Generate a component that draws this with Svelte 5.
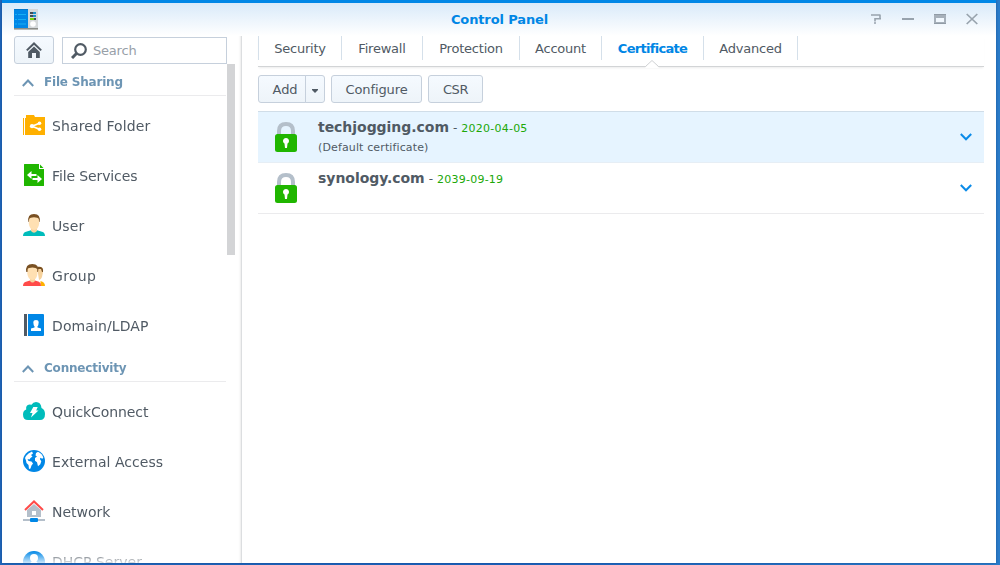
<script>
  const sections = [
    {
      title: 'File Sharing',
      items: [
        { name: 'Shared Folder', icon: 'folder', track: 0.1 },
        { name: 'File Services', icon: 'file', track: -0.12 },
        { name: 'User', icon: 'user', track: 0.1 },
        { name: 'Group', icon: 'group', track: 0.3 },
        { name: 'Domain/LDAP', icon: 'domain', track: 0.1 }
      ]
    },
    {
      title: 'Connectivity',
      items: [
        { name: 'QuickConnect', icon: 'cloud', track: -0.1 },
        { name: 'External Access', icon: 'globe', track: 0.05 },
        { name: 'Network', icon: 'network', track: 0 },
        { name: 'DHCP Server', icon: 'dhcp', track: 0 }
      ]
    }
  ];
  const tabs = [
    { name: 'Security', width: 83 },
    { name: 'Firewall', width: 81 },
    { name: 'Protection', width: 97 },
    { name: 'Account', width: 82 },
    { name: 'Certificate', width: 102 },
    { name: 'Advanced', width: 95 }
  ];
  const certificates = [
    { domain: 'techjogging.com', date: '2020-04-05', isDefault: true },
    { domain: 'synology.com', date: '2039-09-19', isDefault: false }
  ];
  let active = $state('Certificate');
  let selected = $state('techjogging.com');
</script>

<div class="desktop">
  <div class="window">
    <header class="titlebar">
      <svg class="app-icon" width="24" height="21" viewBox="0 0 24 21">
        <rect y="19" width="24" height="1" fill="#8b8d89" />
        <rect y="20" width="24" height="1" fill="#b9bab6" />
        <rect width="14" height="19" fill="#0087e6" />
        <rect width="14" height="1" fill="#0077cc" />
        <path d="M1 5.500h2M4 5.500h8M1 10.500h2M4 10.500h8M1 15h2M4 15h8" stroke="#16aef4" />
        <rect x="14" width="10" height="19" fill="#d4d8da" />
        <path d="M16 4h6M16 7h6M16 10h6" stroke="#414c56" stroke-width="2" />
        <path d="M19 4h3M19 7h3" stroke="#12a5ed" stroke-width="1.500" />
        <path d="M16 10h4" stroke="#76d500" stroke-width="2" />
        <circle cx="19" cy="15" r="2.800" fill="#fff" />
      </svg>
      <h1>Control Panel</h1>
      <div class="controls">
        <svg width="12" height="12" viewBox="0 0 12 12"><path d="M1 2h9.500M10 2v4M11 5.700H5M5 5v3.500M4 10h2" fill="none" stroke="#98a3ad" stroke-width="1.600" /></svg>
        <svg width="12" height="12" viewBox="0 0 12 12"><path d="M0 6h12" stroke="#98a3ad" stroke-width="2" /></svg>
        <svg width="12" height="12" viewBox="0 0 12 12"><path d="M0 1h12v10H0z" fill="#a6b0ba" /><path d="M0 1h12v1H0zM0 10h12v1H0z" fill="#919ca6" /><path d="M2 5h8v4H2z" fill="#f1f8fe" /></svg>
        <svg width="12" height="12" viewBox="0 0 12 12"><path d="M.7 1l10.600 10M11.300 1L.7 11" stroke="#98a3ad" stroke-width="1.700" /></svg>
      </div>
    </header>

    <div class="body">
      <aside>
        <div class="tools">
          <button class="home" aria-label="Home">
            <svg width="16" height="16" viewBox="0 0 16 16"><path d="M.8 8.400L8 1.500l7.200 6.900" fill="none" stroke="#505a64" stroke-width="2" /><path d="M2.200 10L8 4.500l5.800 5.500v6H10v-5H6v5H2.200z" fill="#505a64" /></svg>
          </button>
          <label class="search">
            <svg width="16" height="16" viewBox="0 0 16 16"><circle cx="9.500" cy="6.500" r="5.300" fill="none" stroke="#505a64" stroke-width="2.200" /><path d="M5.500 10.500L1 15" stroke="#505a64" stroke-width="3" /></svg>
            <input placeholder="Search" aria-label="Search" />
          </label>
        </div>
        <div class="scroll">
          <nav>
            {#each sections as section}
              <h2>
                <svg width="12" height="8" viewBox="0 0 12 8"><path d="M.8 7L6 1.500 11.200 7" fill="none" stroke="#6d95b4" stroke-width="2" /></svg>
                <span>{section.title}</span>
              </h2>
              <ul>
                {#each section.items as item}
                  <li>
                    <svg width="22" height="22" viewBox="0 0 22 22">
                      {#if item.icon === 'folder'}
                        <path d="M0 4h1v17H0zM2 21V4h1V1h8l1 2h10v18z" fill="#ffb000" />
                        <path d="M16.500 9.200L9 12.200l7.500 3" stroke="#fff" stroke-width="1.700" fill="none" />
                        <g fill="#fff"><circle cx="16.500" cy="9.200" r="1.800" /><circle cx="9" cy="12.200" r="2.100" /><circle cx="16.500" cy="15.200" r="1.800" /></g>
                      {:else if item.icon === 'file'}
                        <path d="M1.500 0H16v5h5v16.500q0 .5-.5.500h-19Q1 22 1 21.500V.5Q1 0 1.500 0z" fill="#20b600" />
                        <path d="M17 .5L20.500 4H17z" fill="#20b600" />
                        <path d="M4 11l4.500-4v3h5v2h-5v3zM19 15l-4.500-4v3h-5v2h5v3z" fill="#fff" />
                      {:else if item.icon === 'user'}
                        <path d="M0 22q0-3.500 3-4.300l5-1.400h6l5 1.400q3 .8 3 4.300z" fill="#00bcbb" />
                        <path d="M8 14h6v3q-3 3.500-6 0z" fill="#f6d29d" />
                        <path d="M5.500 8Q4 0 11 0t5.500 8z" fill="#795022" />
                        <path d="M6.200 5Q7 3.300 11 3.300T15.800 5l.4 4.500Q15.500 15.500 11 16 6.500 15.500 5.800 9.500z" fill="#ffe0b2" />
                      {:else if item.icon === 'group'}
                        <path d="M17.500 22v-5q4.500 1 4.500 5z" fill="#ffb000" />
                        <path d="M14 3q7-1 6 5l-1 5q-1 3-3 3z" fill="#f6d29d" /><path d="M14 3q7-1 6 5h-1l-1-3h-3z" fill="#795022" />
                        <path d="M0 22q0-3.500 3-4.300l4-1.200h5l4 1.200q2 .8 2 4.300z" fill="#ff4b49" />
                        <path d="M7 14h5v3q-2.500 3-5 0z" fill="#f6d29d" />
                        <path d="M3.300 8Q2 0 9.300 0t5.700 8z" fill="#795022" />
                        <path d="M4.700 5Q5.500 3.500 9.400 3.500T14.200 5l.3 4.500Q14 15.500 9.500 16 5 15.500 4.300 9.500z" fill="#ffe0b2" />
                      {:else if item.icon === 'domain'}
                        <path d="M1 0h3v22H1z" fill="#505a64" /><path d="M5 0h15q1 0 1 1v20q0 1-1 1H5z" fill="#0087e6" />
                        <path d="M10.300 8q0-2 2.700-2t2.700 2l-.3 2.500q-.2 1.300-1 2l.1 1 3.500 1V17H8v-2.500l3.500-1 .1-1q-.8-.7-1-2z" fill="#fff" />
                      {:else if item.icon === 'cloud'}
                        <path d="M5 20Q0 20 0 14.500q0-4 3.200-5Q2.500 5 6.500 4.500q1.500 0 2 .3Q10 2 13 2q5 0 5.500 6Q22 9.500 22 14q0 6-5 6z" fill="#00bcbb" />
                        <path d="M10.300 7h4.400l-1.500 3.500h2.300L8 17.500l1.500-4.500H7z" fill="#fff" />
                      {:else if item.icon === 'globe'}
                        <circle cx="11" cy="11" r="11" fill="#0087e6" />
                        <path d="M2 8l1-2q2-3 6-4.500l1 2L8 5l1.500 1.500-2 1.500-1 1.500-2-.5 1 2 3 .5 1.500 2-1.500 2-1 3-1.500.5-.5-4-2-2-.5-2.500zM13 3l2-1.200q4.500 2 5.300 6l-1 1-2-1-.3 1.500 1.300 2-1 3-2.300 2-1-4-2-1.500L12 8l2-1.500-1.500-1z" fill="#fff" />
                      {:else if item.icon === 'network'}
                        <path d="M4 10l7-6 7 6v7H4z" fill="#b4bfca" /><path d="M9 11h4v4H9z" fill="#fff" />
                        <path d="M2 10L11 1.500 20 10" fill="none" stroke="#ff4b49" stroke-width="2" />
                        <path d="M0 20h22" stroke="#b4bfca" stroke-width="2" /><rect x="7" y="18" width="8" height="4" rx="1" fill="#0087e6" />
                      {:else}
                        <circle cx="11" cy="12" r="11" fill="#0087e6" /><circle cx="11" cy="8" r="4" fill="#fff" /><path d="M9 11h4l5 6H4z" fill="#fff" />
                      {/if}
                    </svg>
                    <span style:letter-spacing="{item.track}px">{item.name}</span>
                  </li>
                {/each}
              </ul>
            {/each}
          </nav>
          <div class="scrollbar"></div>
        </div>
      </aside>

      <main>
        <div class="tabs">
          {#each tabs as tab}
            <button class:active={active === tab.name} style:width="{tab.width}px" onclick={() => (active = tab.name)}>
              {tab.name}
              {#if active === tab.name}
                <svg class="pointer" width="14" height="8" viewBox="0 0 14 8"><path d="M0 8L1 6.500 7 .5l6 6L14 8z" fill="#fff" /><path d="M.5 6.500L7 .5l6.500 6" fill="none" stroke="#cfd1d3" /></svg>
              {/if}
            </button>
          {/each}
        </div>
        <div class="actions">
          <div class="split">
            <button class="add">Add</button>
            <button class="drop" aria-label="More"><svg width="6" height="4" viewBox="0 0 6 4"><path d="M0 0h6v1L3 4 0 1z" fill="#505a64" /></svg></button>
          </div>
          <button class="configure">Configure</button>
          <button class="csr">CSR</button>
        </div>
        <div class="list">
          {#each certificates as cert}
            <!-- svelte-ignore a11y_click_events_have_key_events, a11y_no_static_element_interactions -->
            <div class="row" class:selected={selected === cert.domain} onclick={() => (selected = cert.domain)}>
              <svg class="lock" width="22" height="30" viewBox="0 0 22 30">
                <path d="M4 14V9q0-7 7-7t7 7v5" fill="none" stroke="#b4bfca" stroke-width="4" />
                <rect y="12" width="22" height="18" rx="2.500" fill="#20b600" />
                <path d="M9.500 21.500a3 3 0 1 1 3 0L12 26h-2z" fill="#fff" />
              </svg>
              <div class="info">
                <div class="line"><strong>{cert.domain}</strong><span class="dash">-</span><span class="date">{cert.date}</span></div>
                {#if cert.isDefault}<div class="note">(Default certificate)</div>{/if}
              </div>
              <svg class="chevron" width="12" height="8" viewBox="0 0 12 8"><path d="M.8 1L6 6.300 11.200 1" fill="none" stroke="#0b8be8" stroke-width="2" /></svg>
            </div>
          {/each}
        </div>
      </main>
    </div>
  </div>
</div>

<style>
  :global(body) { margin: 0; }
  * { box-sizing: border-box; }
  .desktop {
    width: 1000px; height: 565px; overflow: hidden; padding: 0 4px 2px 2px;
    background: linear-gradient(90deg, #2068bd 0, #1c63be 50%, #2b7dcb 100%);
    font-family: Verdana, "DejaVu Sans", sans-serif; color: #505a64;
  }
  .window {
    height: 563px; display: flex; flex-direction: column; border-top: 3px solid #0087e6;
    background: linear-gradient(#d9eaf9, #fff 33px) no-repeat #fff;
    box-shadow: 0 0 3px rgba(0, 20, 60, .35);
  }
  button { font: inherit; color: inherit; padding: 0; margin: 0; }
  svg { display: block; flex: none; }
  .titlebar { height: 33px; flex: none; display: grid; grid-template-columns: 200px 1fr 200px; align-items: center; padding: 0 18px 0 12px; }
  h1 { margin: 0 0 0 7px; text-align: center; font-size: 13px; line-height: 18px; color: #0086e5; letter-spacing: -.12px; }
  .controls { display: flex; gap: 20px; justify-content: flex-end; padding-bottom: 1px; }
  .body { flex: 1; min-height: 0; display: flex; }
  aside { width: 240px; border-right: 1px solid #dcdee0; box-shadow: inset -3px 0 2px -2px #ededed; display: flex; flex-direction: column; padding-left: 12px; }
  .tools { display: flex; gap: 8px; height: 28px; flex: none; }
  .home { width: 40px; height: 28px; display: grid; place-items: center; border: 1px solid #c6d0dc; border-radius: 3px; background: linear-gradient(#f5faff, #eef4f9); }
  .search { width: 165px; height: 27px; margin-top: 1px; border: 1px solid #c6d0dc; background: #fff; display: flex; align-items: center; padding-left: 8px; gap: 6px; }
  input { width: 120px; border: 0; outline: 0; padding: 0; font: 13px Verdana, "DejaVu Sans", sans-serif; letter-spacing: -.2px; background: none; }
  input::placeholder { color: #98a0a8; opacity: 1; }
  .scroll { flex: 1; min-height: 0; display: flex; overflow: hidden; -webkit-mask-image: linear-gradient(#000 calc(100% - 12px), rgba(0, 0, 0, .2)); mask-image: linear-gradient(#000 calc(100% - 12px), rgba(0, 0, 0, .2)); }
  nav { width: 213px; padding-top: 1px; }
  h2 { margin: 0; height: 31px; display: flex; align-items: center; gap: 10px; padding: 4px 0 0 8px; border-bottom: 1px solid #ebebed; width: 212px; font-size: 12px; color: #6d95b4; letter-spacing: -.2px; }
  h2 svg { margin-top: 1px; }
  ul { list-style: none; margin: 5px 0 0; padding: 0; }
  li { height: 50px; display: flex; align-items: center; gap: 7px; padding-left: 9px; font-size: 14px; white-space: nowrap; }
  li svg { margin-bottom: 2px; }
  .scrollbar { width: 8px; height: 191px; background: #d3d4d6; }
  main { flex: 1; padding: 0 12px 0 16px; }
  .tabs { height: 31px; border-bottom: 1px solid #d2d4d6; box-shadow: 0 2px 2px -1px #ececec; display: flex; }
  .tabs button { position: relative; height: 24px; border: 0; border-left: 1px solid #d5e0ea; background: none; font-size: 13px; letter-spacing: -.22px; white-space: nowrap; }
  .tabs button:last-child { border-right: 1px solid #d5e0ea; }
  .tabs button.active { color: #0086e5; font-weight: bold; letter-spacing: -.7px; }
  .pointer { position: absolute; left: 43px; top: 24px; }
  .actions { display: flex; gap: 6px; margin-top: 8px; height: 28px; }
  .actions button { height: 28px; border: 1px solid #c6d0dc; border-radius: 3px; background: linear-gradient(#f5faff, #eef4f9); font-size: 13px; letter-spacing: -.1px; }
  .split { display: flex; }
  .split .add { width: 48px; border-radius: 3px 0 0 3px; padding-left: 6px; }
  .split .drop { width: 20px; margin-left: -1px; border-radius: 0 3px 3px 0; display: grid; place-items: center; padding-top: 3px; }
  .configure { width: 91px; }
  .actions .csr { width: 55px; letter-spacing: -.4px; }
  .list { margin-top: 8px; border-top: 1px solid #d0dde8; }
  .row { height: 51px; display: flex; padding: 9px 12px 0 17px; border-bottom: 1px solid #ebebed; }
  .row.selected { background: #e6f4ff; border-color: #e6eef5; }
  .lock { margin-top: 1px; }
  .info { flex: 1; margin-left: 21px; margin-top: -4px; font-size: 12px; }
  .line { display: flex; align-items: baseline; height: 20px; line-height: 20px; white-space: nowrap; }
  .line strong { font-size: 14px; letter-spacing: -.04px; }
  .dash { margin: 0 4px; }
  .date { color: #20a808; font-size: 11px; letter-spacing: .24px; }
  .note { font-size: 11px; line-height: 18px; margin-top: 2px; letter-spacing: .13px; }
  .chevron { margin-top: 12px; }
</style>
